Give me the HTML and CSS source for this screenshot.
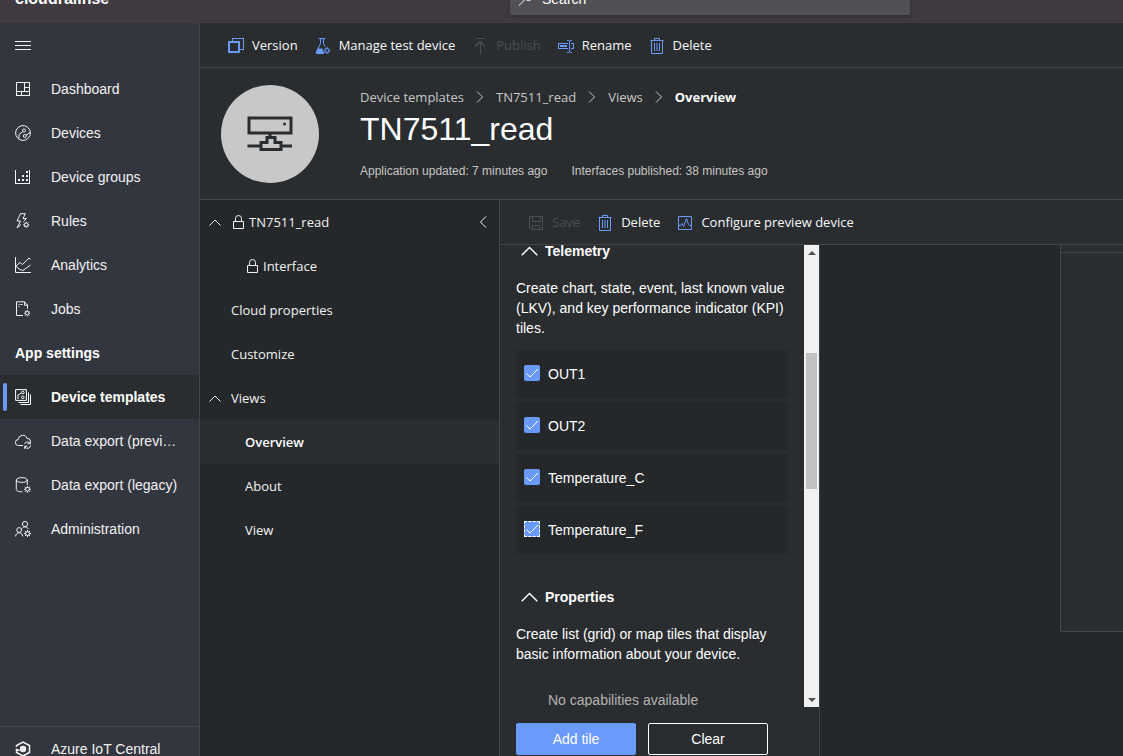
FILE: index.html
```html
<!DOCTYPE html>
<html lang="en">
<head>
<meta charset="utf-8">
<title>TN7511_read - Azure IoT Central</title>
<link rel="stylesheet" href="styles.css">
</head>
<body>
<svg class="sprite" aria-hidden="true">
  <symbol id="gear" viewBox="0 0 7 7"><circle cx="3.5" cy="3.5" r="1.9"/><path d="M3.5 0v1.6M3.5 5.4V7M0 3.5h1.6M5.4 3.5H7M1 1l1.2 1.2M4.8 4.8L6 6M6 1L4.8 2.2M1 6l1.2-1.2"/></symbol>
  <symbol id="up" viewBox="0 0 12 7"><path d="M.5 6.500L6 1l5.500 5.500"/></symbol>
  <symbol id="lock" viewBox="0 0 12 15"><path d="M.5 6.500h10v7H.5zM2.500 6.500V3.500a3 3 0 0 1 6 0v3"/></symbol>
  <symbol id="right" viewBox="0 0 8 12"><path d="M1 .5L6.500 6 1 11.500"/></symbol>
  <symbol id="trash" viewBox="0 0 16 16"><path d="M1.500 2.500h13M5.500 2.500v-2h5v2M2.500 2.500v13h11v-13M5.500 5v8M8 5v8M10.500 5v8"/></symbol>
  <symbol id="check" viewBox="0 0 16 16"><path d="M2.500 8.500L6 12l8-8"/></symbol>
</svg>

<header class="topbar">
  <div class="topbar-inner">
    <div class="brand">cloudralinse</div>
    <label class="search">
      <svg class="icon" viewBox="0 0 16 16"><circle cx="10.500" cy="5" r="4.500"/><path d="M7.300 8.200L.8 14.700"/></svg>
      <input type="search" placeholder="Search" aria-label="Search">
    </label>
  </div>
</header>

<div class="shell">
  <nav class="sidenav" aria-label="Main">
    <button class="nav-row menu" aria-label="Toggle menu"><svg class="icon crisp" viewBox="0 0 16 16"><path d="M0 4.500h16M0 8.500h16M0 12.500h16"/></svg></button>
    <a class="nav-row" href="#"><svg class="icon crisp" viewBox="0 0 16 16"><path d="M1.500 1.500h13v13h-13zM9.500 1.500v9M1.500 10.500h13M6.500 10.500v4M9.500 6.500h5"/></svg><span>Dashboard</span></a>
    <a class="nav-row" href="#"><svg class="icon" viewBox="0 0 16 16"><circle cx="8" cy="8" r="7.400"/><circle cx="9" cy="5.500" r="1.500"/><circle cx="9.800" cy="11" r="1.500"/><path d="M4 13.500V9.500L7.900 6.500M11 10.200l4-2.700"/></svg><span>Devices</span></a>
    <a class="nav-row" href="#"><svg class="icon crisp" viewBox="0 0 16 16"><path d="M.5 1v13.500h14V1"/><path class="solid" d="M3 10h1.500v2H3zM7 10h1.500v2H7zM11 10h1.500v2H11zM7 6h1.500v2H7zM11 6h1.500v2H11zM11 2h1.500v2H11z"/></svg><span>Device groups</span></a>
    <a class="nav-row" href="#"><svg class="icon" viewBox="0 0 16 16"><path d="M5.500.7h4.800L8 5.500h3.500L8.500 8.500M5.500.7L2 8h3.500L2 15l4-3.500"/><use href="#gear" x="8" y="8.500" width="6.500" height="6.500"/></svg><span>Rules</span></a>
    <a class="nav-row" href="#"><svg class="icon" viewBox="0 0 16 16"><path d="M.5 0v15.500H16M1 9l4-3.500 2.500 2L14 1l1.500 1.500M1 9.500l4 3 3 1 7.500-5.500"/></svg><span>Analytics</span></a>
    <a class="nav-row" href="#"><svg class="icon" viewBox="0 0 16 16"><path d="M8 14.500H1.500V.8h8l3 3.200v4M9.500.8v3.400h3M3.500 3.500h1M5.500 3.500h2M3.500 5.500h1"/><use href="#gear" x="9" y="9" width="6.500" height="6.500"/></svg><span>Jobs</span></a>
    <h2 class="nav-title">App settings</h2>
    <a class="nav-row active" href="#" aria-current="page"><svg class="icon" viewBox="0 0 16 16"><path d="M.6.6h10.800v10.800H.6zM3.500 13.500h10v-10M5.500 15.500h10v-10"/><circle cx="7.800" cy="3.500" r="1.300"/><circle cx="7.800" cy="8.300" r="1.300"/><path d="M3 10V6l3.500-2"/></svg><span>Device templates</span></a>
    <a class="nav-row" href="#"><svg class="icon" viewBox="0 0 16 16"><path d="M8 12.500H3.500a3 3 0 0 1-.3-6A4.500 4.500 0 0 1 12 5.500a3 3 0 0 1 3.500 2.500M9.500 11A3 3 0 0 1 15 10.500M15.300 8V10.800h-2.600M15.500 12.500A3 3 0 0 1 10 14M9.700 16v-2.800h2.600"/></svg><span>Data export (previ…</span></a>
    <a class="nav-row" href="#"><svg class="icon" viewBox="0 0 16 16"><ellipse cx="6.800" cy="3" rx="5.500" ry="2.400"/><path d="M1.300 3v9.500c0 1.500 3 2.500 6.200 2.300M12.300 3v5"/><use href="#gear" x="9" y="8.800" width="7" height="7"/></svg><span>Data export (legacy)</span></a>
    <a class="nav-row" href="#"><svg class="icon" viewBox="0 0 16 16"><circle cx="10" cy="3" r="2.600"/><circle cx="4.200" cy="9" r="2.400"/><path d="M.6 15.500c0-5 7-5 7 0M7 7.500c1.500-2.200 5.500-2 6.300.5"/><use href="#gear" x="9" y="9" width="7" height="7"/></svg><span>Administration</span></a>
    <div class="nav-foot"><a class="nav-row" href="#"><svg class="icon" viewBox="0 0 16 16"><path d="M1.500 6V4.500L8 1l6.500 3.500v7L8 15l-6.500-3.500V8.500l3 1" stroke-width="1.500"/><circle class="solid" cx="8" cy="8" r="3.200"/></svg><span>Azure IoT Central</span></a></div>
  </nav>

  <main class="main">
    <div class="toolbar segoe">
      <button><svg class="icon blue crisp" viewBox="0 0 16 16"><path d="M.5 3.500h11v11H.5zM4 3V.5h11.500v11H12M1.500 4.500h9v9h-9z"/></svg>Version</button>
      <button><svg class="icon blue" viewBox="0 0 16 16"><path d="M3.500.6h7M5.500.6v5L1 14.500q0 1 1 1h7M8.500.6v5L10 8.500"/><path class="solid" d="M2.800 10.500h4.500l2 5H1z"/><use href="#gear" x="8.500" y="9" width="7" height="7"/></svg>Manage test device</button>
      <button disabled><svg class="icon crisp" viewBox="0 0 16 16"><path d="M3.500.5h9M8 16V4M3 8.500L8 3.500l5 5"/></svg>Publish</button>
      <button><svg class="icon blue crisp" viewBox="0 0 16 16"><path d="M10 5.500H.5v5H10M13 5.500h2.500v5H13M9 2.500h1.500l1 1 1-1H14M11.500 3.500v10M9 14.500h1.500l1-1 1 1H14"/><path class="solid" d="M2 7h7v2H2z"/></svg>Rename</button>
      <button><svg class="icon blue"><use href="#trash"/></svg>Delete</button>
    </div>

    <section class="hero">
      <div class="avatar"><svg viewBox="0 0 48 40"><path d="M3 4h42v15H3zM24 19v5M24 23.500h-3v5h-6v7h20v-7h-6v-5h-5M1.500 32H15M35 32h11"/><circle cx="38.500" cy="10" r="1.500"/></svg></div>
      <div class="hero-text">
        <nav class="crumbs segoe" aria-label="Breadcrumb">
          <a href="#">Device templates</a><svg class="sep"><use href="#right"/></svg>
          <a href="#">TN7511_read</a><svg class="sep"><use href="#right"/></svg>
          <a href="#">Views</a><svg class="sep"><use href="#right"/></svg>
          <strong>Overview</strong>
        </nav>
        <h1>TN7511_read</h1>
        <p class="meta"><span>Application updated: 7 minutes ago</span><span>Interfaces published: 38 minutes ago</span></p>
      </div>
    </section>

    <div class="work">
      <nav class="tree segoe" aria-label="Template">
        <div class="tree-row root"><button class="toggle" aria-label="Collapse TN7511_read"><svg class="chev"><use href="#up"/></svg></button><svg class="lock"><use href="#lock"/></svg><a href="#">TN7511_read</a>
          <button class="fold" aria-label="Collapse panel"><svg class="left" viewBox="0 0 8 12"><path d="M7 .5L1.500 6 7 11.500"/></svg></button></div>
        <div class="tree-row iface"><svg class="lock"><use href="#lock"/></svg><a href="#">Interface</a></div>
        <div class="tree-row leaf"><a href="#">Cloud properties</a></div>
        <div class="tree-row leaf"><a href="#">Customize</a></div>
        <div class="tree-row"><button class="toggle" aria-label="Collapse Views"><svg class="chev"><use href="#up"/></svg></button><a href="#">Views</a></div>
        <div class="tree-row child active"><a href="#">Overview</a></div>
        <div class="tree-row child"><a href="#">About</a></div>
        <div class="tree-row child"><a href="#">View</a></div>
      </nav>

      <div class="editor">
        <div class="toolbar segoe">
          <button disabled><svg class="icon crisp" viewBox="0 0 16 16"><path d="M1.500 1.500h13v13h-11l-2-2zM4.500 1.500v5h8v-5M4.500 14.500v-4h7v4M6.500 14.500v-2"/></svg>Save</button>
          <button><svg class="icon blue"><use href="#trash"/></svg>Delete</button>
          <button><svg class="icon blue" viewBox="0 0 16 16"><path d="M1.500 1.500h13v13h-13zM1.500 10.500h2l1.500-2 1.500 3 3-8 2 6 1 1h2"/></svg>Configure preview device</button>
        </div>
        <div class="edit-body">
          <div class="panel">
            <div class="scroll">
              <div class="scroll-content">
                <section>
                  <h3><svg class="big-chev"><use href="#up"/></svg>Telemetry</h3>
                  <p>Create chart, state, event, last known value (LKV), and key performance indicator (KPI) tiles.</p>
                  <div class="cards">
                    <label class="card"><span class="box"><input type="checkbox" checked><svg><use href="#check"/></svg></span>OUT1</label>
                    <label class="card"><span class="box"><input type="checkbox" checked><svg><use href="#check"/></svg></span>OUT2</label>
                    <label class="card"><span class="box"><input type="checkbox" checked><svg><use href="#check"/></svg></span>Temperature_C</label>
                    <label class="card"><span class="box focused"><input type="checkbox" checked><svg><use href="#check"/></svg></span>Temperature_F</label>
                  </div>
                </section>
                <section>
                  <h3><svg class="big-chev"><use href="#up"/></svg>Properties</h3>
                  <p>Create list (grid) or map tiles that display basic information about your device.</p>
                  <div class="empty">No capabilities available</div>
                </section>
              </div>
              <div class="scrollbar" aria-hidden="true"><i class="arrow top"></i><div class="track"><div class="thumb"></div></div><i class="arrow bottom"></i></div>
            </div>
            <div class="actions"><button class="primary">Add tile</button><button>Clear</button></div>
          </div>
          <div class="canvas"><div class="tile"><div class="tile-head"></div></div></div>
        </div>
      </div>
    </div>
  </main>
</div>
</body>
</html>
```
FILE: styles.css
```css
* { box-sizing: border-box; }
body {
  margin: 0;
  height: 100vh;
  overflow: hidden;
  display: flex;
  flex-direction: column;
  background: #292d30;
  color: #fff;
  font: 14px/20px "Liberation Sans", Arial, sans-serif;
}
h1, h2, h3, p { margin: 0; }
a { color: inherit; text-decoration: none; }
button { font: inherit; color: inherit; background: none; border: 0; padding: 0; cursor: pointer; }
.segoe { font-family: "Open Sans", "Noto Sans", sans-serif; font-size: 13px; }

.sprite { position: absolute; width: 0; height: 0; }
svg { fill: none; stroke: currentColor; flex: none; }
.icon { width: 16px; height: 16px; }
.crisp { shape-rendering: crispEdges; }
.blue { color: #6b9aff; }
.solid { fill: currentColor; stroke: none; }

.topbar { flex: none; height: 23px; display: flex; align-items: flex-end; overflow: hidden; background: #3e3a40; }
.topbar-inner { flex: 1; height: 48px; display: flex; align-items: center; }
.brand { width: 510px; padding-left: 15px; font-size: 16px; font-weight: bold; }
.search { width: 400px; height: 32px; display: flex; align-items: center; gap: 8px; padding: 0 8px; background: #515054; border-radius: 2px; box-shadow: 0 2px 4px #00000030; }
.search input { flex: 1; min-width: 0; padding: 0; border: 0; outline: 0; background: none; color: #fff; font: inherit; }
.search input::placeholder { color: #fff; opacity: 1; }

.shell { flex: 1; min-height: 0; display: flex; }
.sidenav { flex: none; width: 200px; display: flex; flex-direction: column; overflow: hidden; background: #32363f; border-right: 1px solid #484644; }
.nav-row { position: relative; flex: none; width: 100%; height: 44px; display: flex; align-items: center; gap: 20px; padding-left: 15px; color: #f3f2f1; }
.nav-title { height: 44px; flex: none; padding-left: 15px; font-size: 14px; line-height: 44px; }
.nav-row.active { background: #292d30; color: #fff; font-weight: bold; }
.nav-row.active::before { content: ""; position: absolute; left: 3px; top: 8px; width: 4px; height: 28px; border-radius: 2px; background: #6b9aff; }
.nav-foot { margin-top: auto; flex: none; height: 30px; overflow: hidden; border-top: 1px solid #484644; }

.main { flex: 1; min-width: 0; display: flex; flex-direction: column; }
.toolbar { flex: none; height: 45px; display: flex; align-items: center; gap: 17px; padding: 0 28px; border-bottom: 1px solid #484644; line-height: 18px; white-space: nowrap; }
.toolbar button { display: flex; align-items: flex-start; gap: 8px; color: #f8f8f8; }
.toolbar .icon { margin-top: 2px; }
.toolbar button:disabled { color: #4b4e51; }

.hero { flex: none; height: 132px; display: flex; gap: 41px; padding: 17px 20px 0 21px; border-bottom: 1px solid #484644; }
.avatar { flex: none; width: 98px; height: 98px; display: grid; place-items: center; border-radius: 50%; background: #c8c8c8; color: #292d30; }
.avatar svg { width: 48px; height: 40px; stroke-width: 3; }
.avatar circle { fill: currentColor; stroke: none; }
.crumbs { display: flex; align-items: center; height: 24px; gap: 12px; color: #c8c6c4; }
.crumbs strong { color: #fff; }
.sep { width: 8px; height: 12px; }
h1 { font-size: 32px; font-weight: normal; line-height: 40px; }
.meta { display: flex; gap: 24px; margin-top: 12px; font-size: 12px; color: #c8c6c4; }

.work { flex: 1; min-height: 0; display: flex; }
.tree { flex: none; width: 300px; background: #24282a; border-right: 1px solid #484644; }
.tree-row { height: 44px; display: flex; align-items: center; padding-left: 9px; color: #f3f2f1; }
.tree-row.leaf { padding-left: 31px; }
.tree-row.iface { padding-left: 47px; }
.tree-row.child { padding-left: 45px; }
.tree-row.active { background: #292d30; color: #fff; font-weight: 600; }
.toggle { width: 22px; display: flex; }
.chev { width: 12px; height: 7px; }
.lock { width: 12px; height: 15px; margin-right: 4px; }
.root .lock { margin-left: 2px; }
.fold { margin-left: auto; padding-right: 12px; display: flex; }
.left { width: 8px; height: 12px; }

.editor { flex: 1; min-width: 0; display: flex; flex-direction: column; }
.edit-body { flex: 1; min-height: 0; display: flex; }
.panel { flex: none; width: 320px; display: flex; flex-direction: column; border-right: 1px solid #3f4144; }
.scroll { flex: 1; min-height: 0; display: flex; overflow: hidden; }
.scroll-content { flex: 1; margin-top: -16px; padding: 0 16px; }
section + section { margin-top: 21px; }
h3 { height: 44px; margin-bottom: 5px; display: flex; align-items: center; gap: 7px; padding-left: 5px; font-size: 14px; }
.big-chev { width: 17px; height: 10px; }
.cards { display: grid; gap: 4px; margin-top: 12px; }
.card { height: 48px; display: flex; align-items: center; gap: 8px; padding: 0 8px; background: #24282a; }
.box { display: grid; width: 16px; height: 16px; margin-bottom: 2px; }
.box input, .box svg { grid-area: 1 / 1; width: 16px; height: 16px; margin: 0; }
.box input { appearance: none; border-radius: 2px; background: #6b9aff; }
.box svg { z-index: 1; pointer-events: none; }
.box.focused input { border: 1px dashed #fff; border-radius: 0; }
.empty { padding: 26px 32px 0; color: #b5b3b1; }
.scrollbar { width: 15px; display: flex; flex-direction: column; background: #f1f1f1; }
.track { flex: 1; padding: 93px 2px 0; }
.thumb { height: 136px; background: #c1c1c1; }
.arrow { height: 15px; display: grid; place-items: center; }
.arrow::before { content: ""; border: 4px solid transparent; border-top-width: 0; border-bottom-color: #505050; }
.arrow.bottom::before { border-width: 4px 4px 0; border-top-color: #505050; }
.actions { flex: none; display: flex; gap: 12px; padding: 16px 16px 1px; }
.actions button { width: 120px; height: 32px; border: 1px solid #fff; border-radius: 2px; }
.actions .primary { background: #6b9aff; border-color: #6b9aff; }
.canvas { flex: 1; min-width: 0; padding-left: 240px; background: #24282a; overflow: hidden; }
.tile { height: 387px; background: #292d30; border: 1px solid #484644; border-width: 0 0 1px 1px; border-bottom-left-radius: 2px; }
.tile-head { height: 8px; border-bottom: 1px solid #484644; }
```
